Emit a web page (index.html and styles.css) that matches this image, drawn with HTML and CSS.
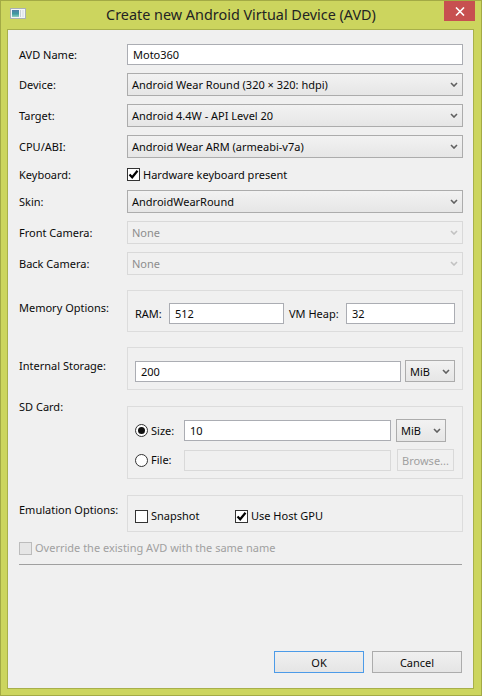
FILE: index.html
```html
<!DOCTYPE html>
<html>
<head>
<meta charset="utf-8">
<title>Create new Android Virtual Device (AVD)</title>
<link rel="stylesheet" href="styles.css">
</head>
<body>
<div class="window">
  <div class="titlebar">
    <svg class="appicon" width="16" height="11" viewBox="0 0 16 11">
      <defs>
        <linearGradient id="ig" x1="0" y1="0" x2="0" y2="1">
          <stop offset="0" stop-color="#4f7fa8"/>
          <stop offset="0.55" stop-color="#3f9aa0"/>
          <stop offset="1" stop-color="#8fd0c0"/>
        </linearGradient>
      </defs>
      <rect x="0.5" y="0.5" width="15" height="10" fill="#f3f5f7" stroke="#a8b0b6"/>
      <rect x="2" y="2" width="7" height="7" fill="url(#ig)"/>
      <rect x="10" y="2" width="1" height="7" fill="#c9d1d6"/>
      <rect x="12" y="2" width="2" height="7" fill="#e3e8ec"/>
    </svg>
    <div class="title">Create new Android Virtual Device (AVD)</div>
    <div class="close">
      <svg width="10" height="9" viewBox="0 0 10 9">
        <path d="M1 0.5 L9 8.5 M9 0.5 L1 8.5" stroke="#fff" stroke-width="1.6" fill="none"/>
      </svg>
    </div>
  </div>

  <div class="client">
    <div class="form">
      <div class="row">
        <div class="lbl">AVD Name:</div>
        <div class="field">Moto360</div>
      </div>
      <div class="row">
        <div class="lbl">Device:</div>
        <div class="combo"><span>Android Wear Round (320 × 320: hdpi)</span><svg class="chev" width="8" height="5" viewBox="0 0 8 5"><path d="M1 1 L4 4 L7 1" /></svg></div>
      </div>
      <div class="row">
        <div class="lbl">Target:</div>
        <div class="combo"><span>Android 4.4W - API Level 20</span><svg class="chev" width="8" height="5" viewBox="0 0 8 5"><path d="M1 1 L4 4 L7 1" /></svg></div>
      </div>
      <div class="row">
        <div class="lbl">CPU/ABI:</div>
        <div class="combo"><span>Android Wear ARM (armeabi-v7a)</span><svg class="chev" width="8" height="5" viewBox="0 0 8 5"><path d="M1 1 L4 4 L7 1" /></svg></div>
      </div>
      <div class="row row-check">
        <div class="lbl">Keyboard:</div>
        <div class="check-item">
          <span class="checkbox checked"><svg width="11" height="11" viewBox="0 0 11 11"><path d="M1.5 5.5 L4.2 8.3 L9.5 1.8"/></svg></span>
          <span>Hardware keyboard present</span>
        </div>
      </div>
      <div class="row row-skin">
        <div class="lbl">Skin:</div>
        <div class="combo"><span>AndroidWearRound</span><svg class="chev" width="8" height="5" viewBox="0 0 8 5"><path d="M1 1 L4 4 L7 1" /></svg></div>
      </div>
      <div class="row">
        <div class="lbl">Front Camera:</div>
        <div class="combo disabled"><span>None</span><svg class="chev" width="8" height="5" viewBox="0 0 8 5"><path d="M1 1 L4 4 L7 1" /></svg></div>
      </div>
      <div class="row">
        <div class="lbl">Back Camera:</div>
        <div class="combo disabled"><span>None</span><svg class="chev" width="8" height="5" viewBox="0 0 8 5"><path d="M1 1 L4 4 L7 1" /></svg></div>
      </div>

      <div class="row row-group">
        <div class="lbl lbl-mem">Memory Options:</div>
        <div class="group">
          <span class="inline-lbl ram-lbl">RAM:</span>
          <div class="field ram-field">512</div>
          <span class="inline-lbl heap-lbl">VM Heap:</span>
          <div class="field heap-field">32</div>
        </div>
      </div>

      <div class="row row-group">
        <div class="lbl lbl-storage">Internal Storage:</div>
        <div class="group">
          <div class="field grow">200</div>
          <div class="combo unit"><span>MiB</span><svg class="chev" width="8" height="5" viewBox="0 0 8 5"><path d="M1 1 L4 4 L7 1" /></svg></div>
        </div>
      </div>

      <div class="row row-sd">
        <div class="lbl lbl-sd">SD Card:</div>
        <div class="group group-sd">
          <div class="sd-line sd-size">
            <div class="radio-item"><span class="radio on"></span><span>Size:</span></div>
            <div class="field sd-field">10</div>
            <div class="combo unit sd-unit"><span>MiB</span><svg class="chev" width="8" height="5" viewBox="0 0 8 5"><path d="M1 1 L4 4 L7 1" /></svg></div>
          </div>
          <div class="sd-line sd-file">
            <div class="radio-item"><span class="radio"></span><span>File:</span></div>
            <div class="field sd-field disabled"></div>
            <div class="btn browse disabled">Browse...</div>
          </div>
        </div>
      </div>

      <div class="row row-emu">
        <div class="lbl lbl-emu">Emulation Options:</div>
        <div class="group group-emu">
          <div class="check-item snap">
            <span class="checkbox"></span>
            <span>Snapshot</span>
          </div>
          <div class="check-item">
            <span class="checkbox checked"><svg width="11" height="11" viewBox="0 0 11 11"><path d="M1.5 5.5 L4.2 8.3 L9.5 1.8"/></svg></span>
            <span>Use Host GPU</span>
          </div>
        </div>
      </div>

      <div class="check-item override">
        <span class="checkbox disabled"></span>
        <span>Override the existing AVD with the same name</span>
      </div>

      <div class="separator"></div>
    </div>

    <div class="buttons">
      <div class="btn default">OK</div>
      <div class="btn">Cancel</div>
    </div>
  </div>
</div>
</body>
</html>
```

FILE: styles.css
```css
* { box-sizing: border-box; }

html, body {
  margin: 0;
  padding: 0;
}

body {
  width: 482px;
  height: 696px;
  overflow: hidden;
  background: #ccd55e;
  font-family: "Noto Sans", "Open Sans", "Liberation Sans", sans-serif;
  font-size: 11px;
  color: #0a0a0a;
}

.window {
  width: 482px;
  height: 696px;
  border: 1px solid #a3aa45;
  background: #ccd55e;
  display: flex;
  flex-direction: column;
}

/* ---------- title bar ---------- */
.titlebar {
  flex: none;
  height: 28px;
  display: grid;
  grid-template-columns: 1fr auto 1fr;
  align-items: start;
}

.appicon {
  display: block;
  margin: 7px 0 0 9px;
}

.title {
  font-size: 14.4px;
  line-height: 28px;
  color: #232323;
  white-space: nowrap;
}

.close {
  justify-self: end;
  margin-right: 6px;
  width: 31px;
  height: 20px;
  background: #c75050;
  display: flex;
  align-items: center;
  justify-content: center;
}

.close svg { display: block; margin-top: 1px; }

/* ---------- client area ---------- */
.client {
  flex: none;
  height: 660px;
  margin: 0 7px 0 6px;
  border: 1px solid #a8b04a;
  background: #f0f0f0;
  display: flex;
  flex-direction: column;
  padding: 14px 10px 15px 11px;
}

.form {
  display: flex;
  flex-direction: column;
}

.row {
  display: grid;
  grid-template-columns: 108px 1fr;
  align-items: center;
}

.row + .row { margin-top: 8px; }
.row.row-skin { margin-top: 7px; }
.row.row-group { margin-top: 15px; }
.row.row-sd { margin-top: 9px; align-items: start; }
.row.row-emu { margin-top: 16px; }

.lbl {
  line-height: 16px;
  white-space: nowrap;
}

.lbl-mem { align-self: start; margin-top: 10px; }
.lbl-storage { align-self: start; margin-top: 11px; }
.lbl-emu { align-self: start; margin-top: 7px; }

/* ---------- controls ---------- */
.field {
  height: 21px;
  border: 1px solid #abadb3;
  background: #fff;
  padding: 0 5px;
  display: flex;
  align-items: center;
  white-space: nowrap;
}

.field.disabled {
  background: #f0f0f0;
  border-color: #d9d9d9;
}

.combo {
  height: 23px;
  border: 1px solid #acacac;
  background: linear-gradient(#f2f2f2, #e6e6e6);
  padding: 0 4px 0 4px;
  display: flex;
  align-items: center;
  white-space: nowrap;
}

.combo span { flex: 1; }

.chev {
  display: block;
  flex: none;
  fill: none;
  stroke: #606060;
  stroke-width: 1.6;
}

.combo.disabled {
  background: #f0f0f0;
  border-color: #d9d9d9;
  color: #8d8d8d;
}

.combo.disabled .chev { stroke: #c2c2c2; }

.combo.unit {
  width: 50px;
  height: 22px;
  flex: none;
}

.row-check { height: 17px; }

.check-item {
  display: flex;
  align-items: center;
  line-height: 16px;
  white-space: nowrap;
}

.checkbox {
  flex: none;
  width: 13px;
  height: 13px;
  border: 1px solid #333;
  background: #fff;
  margin-right: 3px;
  display: flex;
  align-items: center;
  justify-content: center;
}

.checkbox svg {
  display: block;
  fill: none;
  stroke: #000;
  stroke-width: 2.2;
}

.checkbox.disabled {
  border-color: #bcbcbc;
  background: #e6e6e6;
}

.radio-item {
  width: 49px;
  flex: none;
  display: flex;
  align-items: center;
  line-height: 16px;
}

.radio {
  width: 13px;
  height: 13px;
  border: 1px solid #333;
  border-radius: 50%;
  background: #fff;
  margin-right: 3px;
  display: flex;
  align-items: center;
  justify-content: center;
}

.radio.on::after {
  content: "";
  width: 7px;
  height: 7px;
  border-radius: 50%;
  background: #111;
}

/* ---------- group boxes ---------- */
.group {
  border: 1px solid #dcdcdc;
  padding: 12px 7px 7px 7px;
  display: flex;
  align-items: center;
}

.inline-lbl { white-space: nowrap; flex: none; }
.ram-lbl { width: 34px; }
.ram-field { width: 115px; flex: none; }
.heap-lbl { width: 57px; margin-left: 5px; }
.heap-field { flex: 1; }

.grow { flex: 1; }
.group .unit { margin-left: 4px; }

.group-sd {
  margin-top: 7px;
  flex-direction: column;
  align-items: stretch;
}

.sd-line {
  display: flex;
  align-items: center;
}

.sd-size { height: 23px; }
.sd-file { height: 22px; margin-top: 7px; }

.sd-field { width: 207px; flex: none; }
.group .sd-unit { margin-left: 5px; height: 23px; }

.group-emu .check-item { height: 16px; }
.snap { width: 100px; }

.override {
  margin-top: 8px;
  height: 16px;
  color: #a0a0a0;
}

.separator {
  margin-top: 8px;
  margin-right: 1px;
  height: 1px;
  background: #a0a0a0;
}

/* ---------- buttons ---------- */
.btn {
  height: 22px;
  border: 1px solid #acacac;
  background: linear-gradient(#f0f0f0, #e5e5e5);
  display: flex;
  align-items: center;
  justify-content: center;
  white-space: nowrap;
}

.btn.browse {
  width: 57px;
  margin-left: 6px;
  flex: none;
}

.btn.disabled {
  background: #f0f0f0;
  border-color: #d9d9d9;
  color: #a0a0a0;
}

.buttons {
  margin-top: auto;
  margin-right: 1px;
  display: flex;
  justify-content: flex-end;
  gap: 8px;
}

.buttons .btn { width: 90px; }

.btn.default { border-color: #4c9be8; }
```
